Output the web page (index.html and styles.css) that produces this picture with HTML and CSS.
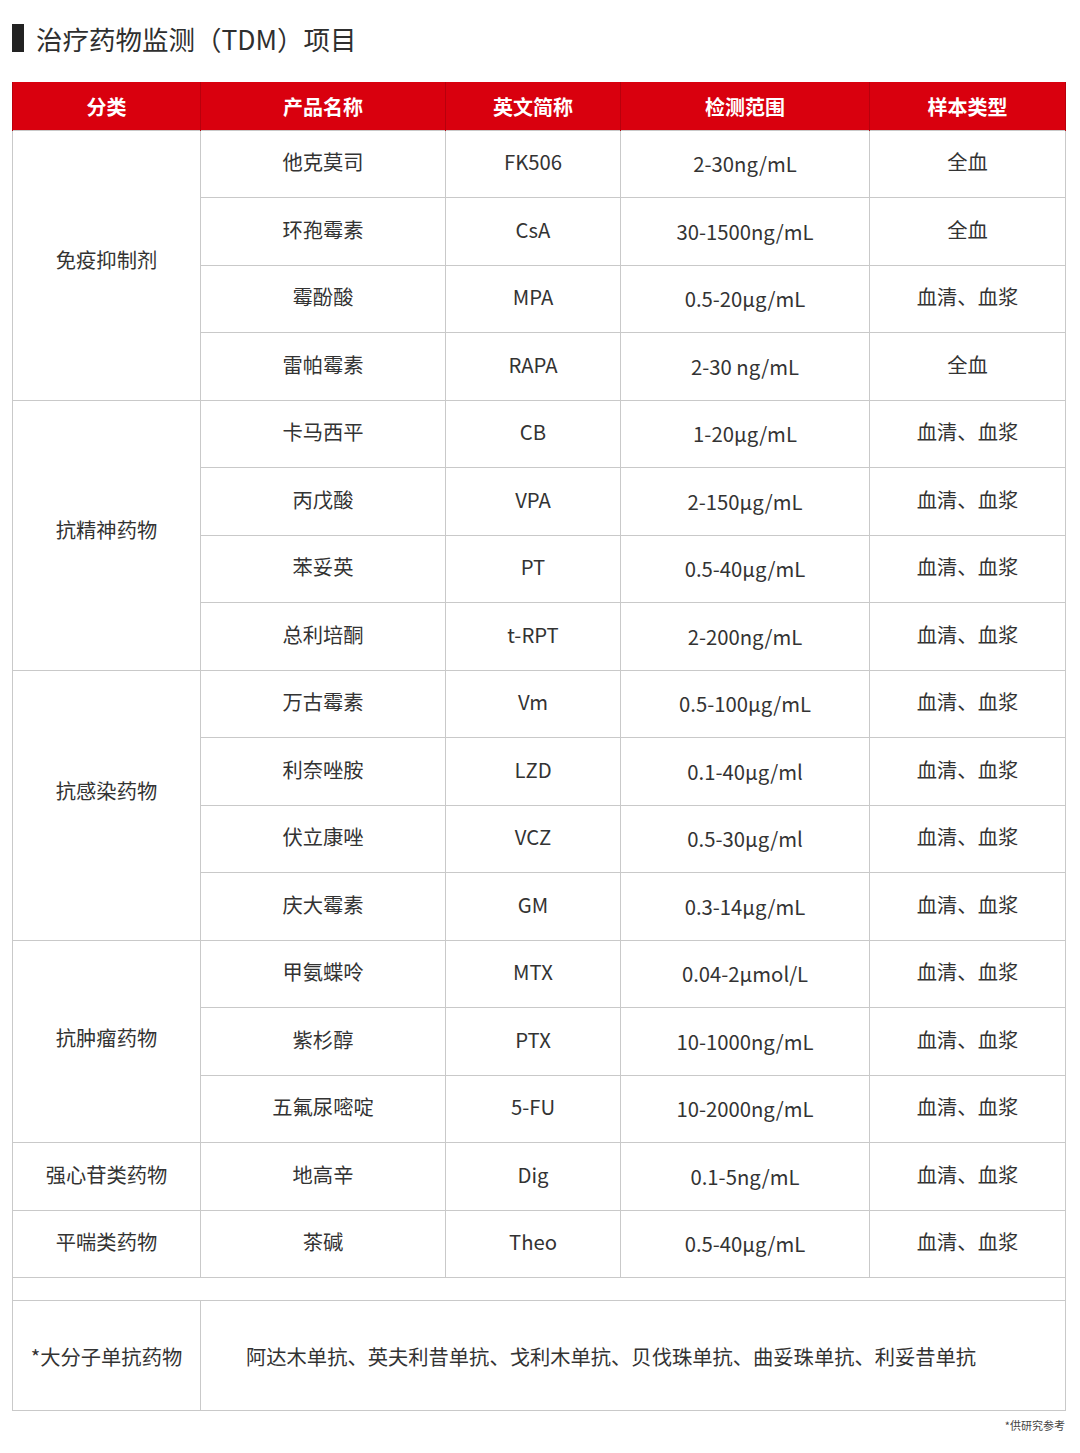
FILE: index.html
```html
<!DOCTYPE html>
<html lang="zh">
<head>
<meta charset="utf-8">
<link rel="stylesheet" href="styles.css">
</head>
<body>
<div class="page">
  <h1 class="title"><span class="bar"></span>治疗药物监测（TDM）项目</h1>
  <table class="tdm">
    <colgroup>
      <col class="c1"><col class="c2"><col class="c3"><col class="c4"><col class="c5">
    </colgroup>
    <thead>
      <tr><th>分类</th><th>产品名称</th><th>英文简称</th><th>检测范围</th><th>样本类型</th></tr>
    </thead>
    <tbody>
      <tr><td rowspan="4" class="cat cat-a">免疫抑制剂</td><td>他克莫司</td><td>FK506</td><td class="rng">2-30ng/mL</td><td>全血</td></tr>
      <tr><td>环孢霉素</td><td>CsA</td><td class="rng">30-1500ng/mL</td><td>全血</td></tr>
      <tr><td>霉酚酸</td><td>MPA</td><td class="rng">0.5-20μg/mL</td><td>血清、血浆</td></tr>
      <tr><td>雷帕霉素</td><td>RAPA</td><td class="rng">2-30 ng/mL</td><td>全血</td></tr>
      <tr><td rowspan="4" class="cat cat-b">抗精神药物</td><td>卡马西平</td><td>CB</td><td class="rng">1-20μg/mL</td><td>血清、血浆</td></tr>
      <tr><td>丙戊酸</td><td>VPA</td><td class="rng">2-150μg/mL</td><td>血清、血浆</td></tr>
      <tr><td>苯妥英</td><td>PT</td><td class="rng">0.5-40μg/mL</td><td>血清、血浆</td></tr>
      <tr><td>总利培酮</td><td>t-RPT</td><td class="rng">2-200ng/mL</td><td>血清、血浆</td></tr>
      <tr><td rowspan="4" class="cat cat-c">抗感染药物</td><td>万古霉素</td><td>Vm</td><td class="rng">0.5-100μg/mL</td><td>血清、血浆</td></tr>
      <tr><td>利奈唑胺</td><td>LZD</td><td class="rng">0.1-40μg/ml</td><td>血清、血浆</td></tr>
      <tr><td>伏立康唑</td><td>VCZ</td><td class="rng">0.5-30μg/ml</td><td>血清、血浆</td></tr>
      <tr><td>庆大霉素</td><td>GM</td><td class="rng">0.3-14μg/mL</td><td>血清、血浆</td></tr>
      <tr><td rowspan="3" class="cat cat-d">抗肿瘤药物</td><td>甲氨蝶呤</td><td>MTX</td><td class="rng">0.04-2μmol/L</td><td>血清、血浆</td></tr>
      <tr><td>紫杉醇</td><td>PTX</td><td class="rng">10-1000ng/mL</td><td>血清、血浆</td></tr>
      <tr><td>五氟尿嘧啶</td><td>5-FU</td><td class="rng">10-2000ng/mL</td><td>血清、血浆</td></tr>
      <tr><td>强心苷类药物</td><td>地高辛</td><td>Dig</td><td class="rng">0.1-5ng/mL</td><td>血清、血浆</td></tr>
      <tr><td>平喘类药物</td><td>茶碱</td><td>Theo</td><td class="rng">0.5-40μg/mL</td><td>血清、血浆</td></tr>
      <tr class="gap"><td colspan="5"></td></tr>
      <tr class="big"><td>*大分子单抗药物</td><td colspan="4" class="list">阿达木单抗、英夫利昔单抗、戈利木单抗、贝伐珠单抗、曲妥珠单抗、利妥昔单抗</td></tr>
    </tbody>
  </table>
  <p class="note">*供研究参考</p>
</div>
</body>
</html>
```

FILE: styles.css
```css
html, body {
  margin: 0;
  padding: 0;
  background: #ffffff;
}
.page {
  width: 1080px;
  padding: 0 15px 0 12px;
  box-sizing: border-box;
  font-family: "Noto Sans CJK SC", "Noto Sans", sans-serif;
  color: #333333;
}
.title {
  display: flex;
  align-items: center;
  margin: 0;
  padding-top: 16px;
  height: 60px;
  box-sizing: border-box;
  font-size: 26.5px;
  font-weight: 400;
  color: #2f2f2f;
}
.bar {
  display: inline-block;
  width: 12px;
  height: 28px;
  background: #222222;
  margin-right: 12px;
}
.tdm {
  margin-top: 22px;
  width: 1053px;
  border-collapse: collapse;
  table-layout: fixed;
}
.c1 { width: 188px; }
.c2 { width: 245px; }
.c3 { width: 175px; }
.c4 { width: 249px; }
.c5 { width: 196px; }
.tdm th {
  background: #d9000e;
  color: #ffffff;
  font-size: 20px;
  font-weight: 700;
  height: 48px;
  box-sizing: border-box;
  padding: 2px 0 0 0;
  border-left: 1px solid #b8000c;
  border-right: 1px solid #b8000c;
}
.tdm td {
  height: 67.5px;
  padding: 0 0 5px 0;
  box-sizing: border-box;
  text-align: center;
  vertical-align: middle;
  font-size: 20.3px;
  color: #333333;
  border: 1.5px solid #c9c9c9;
}
.tdm td.rng {
  padding: 0 0 1px 0;
}
.tdm td.cat-a { padding-bottom: 12px; }
.tdm td.cat-b { padding-bottom: 12px; }
.tdm td.cat-c { padding-bottom: 30px; }
.tdm td.cat-d { padding-bottom: 8px; }
.tdm tr.gap td {
  height: 23px;
  padding: 0;
}
.tdm tr.big td {
  height: 110px;
  padding: 0;
}
.tdm tr.big td.list {
  text-align: left;
  padding-left: 45px;
}
.note {
  margin: 6px 0 0 0;
  text-align: right;
  font-size: 11px;
  color: #444444;
}
```
